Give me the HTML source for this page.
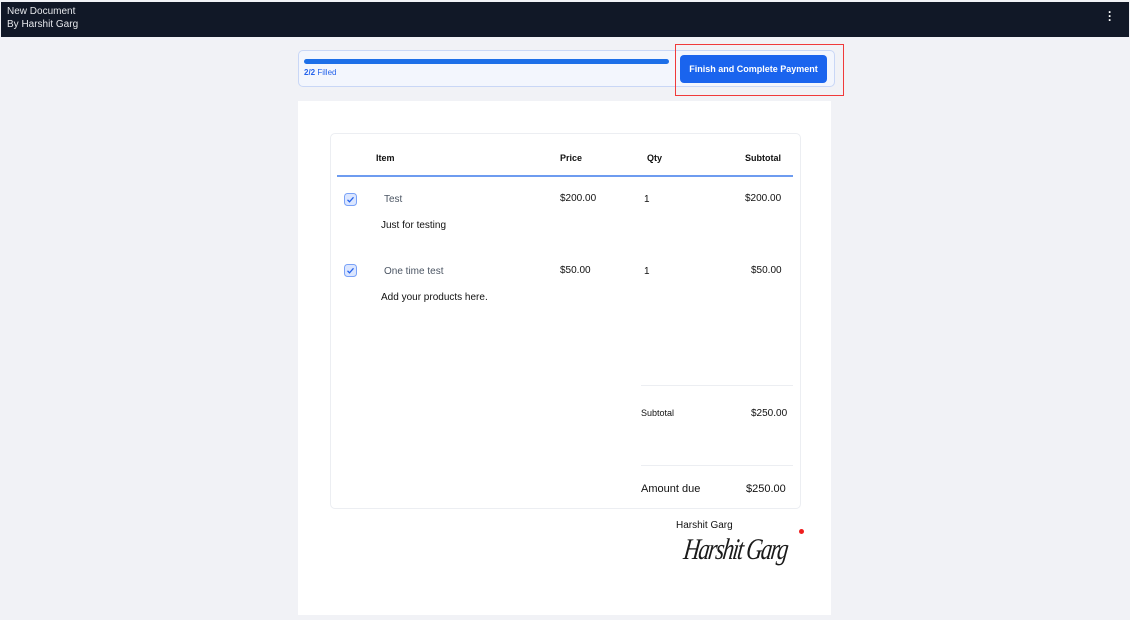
<!DOCTYPE html>
<html><head><style>
*{margin:0;padding:0;box-sizing:border-box}
body{width:1130px;height:620px;background:#f1f2f6;font-family:"Liberation Sans",sans-serif;position:relative;overflow:hidden;color:#111}
.a{position:absolute}
.hdr{left:1px;top:2px;width:1128px;height:35px;background:#111827;color:#e5e7eb;font-size:10px;line-height:13px;padding:3px 6px}
.cb{width:12px;height:12px;border:1px solid #7aa2f7;background:#dbe6ff;border-radius:3px}
.t{font-size:10px}
.b{font-weight:bold}
</style></head><body>
<div class="a hdr">New Document<br>By Harshit Garg</div>
<div class="a" style="left:1108px;top:10px;color:#fff;font-size:12px;font-weight:bold;line-height:4px">·<br>·<br>·</div>
<div class="a" style="left:298px;top:50px;width:537px;height:37px;background:#f3f6fd;border:1px solid #c9d7f6;border-radius:5px"></div>
<div class="a" style="left:304px;top:59px;width:365px;height:5px;background:#1d6fe8;border-radius:3px"></div>
<div class="a t" style="left:304px;top:68px;color:#2563eb;font-size:8px"><b>2/2</b> Filled</div>
<div class="a" style="left:675px;top:44px;width:169px;height:52px;border:1.5px solid #f03a3a"></div>
<div class="a" style="left:680px;top:55px;width:147px;height:28px;background:#1a64ee;border-radius:4px;color:#fff;font-size:9px;font-weight:bold;text-align:center;line-height:28px">Finish and Complete Payment</div>
<div class="a" style="left:298px;top:101px;width:533px;height:514px;background:#fff"></div>
<div class="a" style="left:330px;top:133px;width:471px;height:376px;border:1px solid #eceef2;border-radius:5px"></div>
<div class="a t b" style="left:376px;top:153px;font-size:9px">Item</div>
<div class="a t b" style="left:560px;top:153px;font-size:9px">Price</div>
<div class="a t b" style="left:647px;top:153px;font-size:9px">Qty</div>
<div class="a t b" style="left:745px;top:153px;font-size:9px">Subtotal</div>
<div class="a" style="left:337px;top:175px;width:456px;height:2px;background:#6e9cf0"></div>
<svg class="a" style="left:344px;top:193px" width="13" height="13"><rect x=".5" y=".5" width="12" height="12" rx="3" fill="#dbe6ff" stroke="#7aa2f7"/><path d="M3.5 6.8l2 2 4-4.5" fill="none" stroke="#2563eb" stroke-width="1.3"/></svg>
<div class="a t" style="left:384px;top:194px;color:#4b5563">Test</div>
<div class="a t" style="left:560px;top:193px">$200.00</div>
<div class="a t" style="left:644px;top:194px">1</div>
<div class="a t" style="left:745px;top:193px">$200.00</div>
<div class="a t" style="left:381px;top:220px">Just for testing</div>
<svg class="a" style="left:344px;top:264px" width="13" height="13"><rect x=".5" y=".5" width="12" height="12" rx="3" fill="#dbe6ff" stroke="#7aa2f7"/><path d="M3.5 6.8l2 2 4-4.5" fill="none" stroke="#2563eb" stroke-width="1.3"/></svg>
<div class="a t" style="left:384px;top:266px;color:#4b5563">One time test</div>
<div class="a t" style="left:560px;top:265px">$50.00</div>
<div class="a t" style="left:644px;top:266px">1</div>
<div class="a t" style="left:751px;top:265px">$50.00</div>
<div class="a t" style="left:381px;top:292px">Add your products here.</div>
<div class="a" style="left:641px;top:385px;width:152px;height:1px;background:#eceef2"></div>
<div class="a t" style="left:641px;top:408px;font-size:9px">Subtotal</div>
<div class="a t" style="left:751px;top:408px">$250.00</div>
<div class="a" style="left:641px;top:465px;width:152px;height:1px;background:#eceef2"></div>
<div class="a" style="left:641px;top:483px;font-size:11px">Amount due</div>
<div class="a" style="left:746px;top:483px;font-size:11px">$250.00</div>
<div class="a t" style="left:676px;top:520px">Harshit Garg</div>
<div class="a" style="left:799px;top:529px;width:5px;height:5px;border-radius:50%;background:#ef1d1d"></div>
<div class="a" style="left:684px;top:533px;font-family:'Liberation Serif',serif;font-style:italic;font-size:30px;letter-spacing:-2px;transform:scaleX(0.75) skewX(-10deg);transform-origin:left;color:#1a1a1a">Harshit Garg</div>
</body></html>
